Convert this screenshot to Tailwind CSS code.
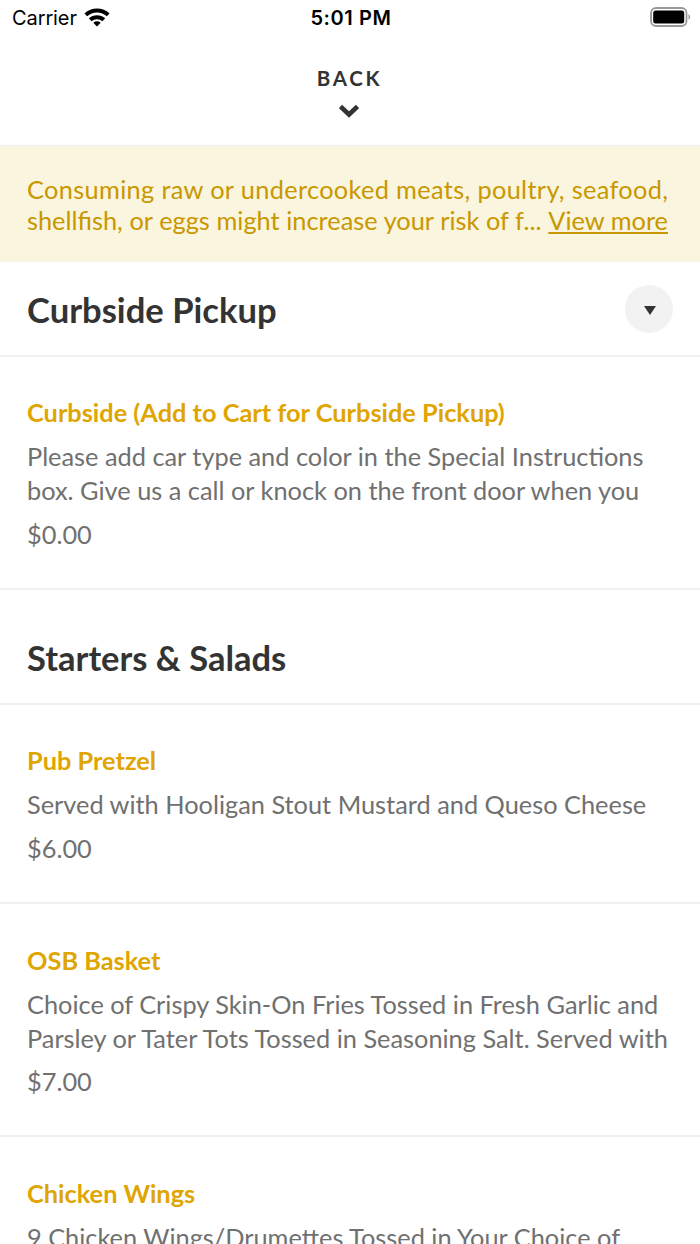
<!DOCTYPE html>
<html lang="en">
<head>
  <meta charset="UTF-8">
  <meta name="viewport" content="width=device-width, initial-scale=1.0">
  <title>Menu</title>
  <script src="https://cdn.jsdelivr.net/npm/@tailwindcss/browser@4"></script>
</head>
<body class="bg-white font-['Lato',sans-serif] text-[#707070] h-[1244px] overflow-hidden">
  <!-- Status bar -->
  <div class="grid grid-cols-3 items-center h-9 pl-3 pr-2 font-['Inter',sans-serif] text-black text-[20px]">
    <div class="flex items-center gap-[7px]">
      <span class="tracking-[-0.1px]">Carrier</span>
      <svg class="w-[26px] h-[19px] -mt-0.5" viewBox="0 0 26 19" fill="none" stroke="#000" stroke-width="4">
        <path d="M1.800 6.900a16.200 16.200 0 0 1 22.400 0"/>
        <path d="M6.200 11.800a10 10 0 0 1 13.600 0"/>
        <path d="M13 18.500l-3.700-3.700a5.500 5.500 0 0 1 7.400 0z" fill="#000" stroke="none"/>
      </svg>
    </div>
    <span class="text-center font-semibold tracking-[0.6px] -ml-0.5">5:01 PM</span>
    <svg class="justify-self-end w-[42px] h-5 -mt-0.5" viewBox="0 0 42 20">
      <rect x="1" y="1" width="35.500" height="18" rx="5" fill="none" stroke="#999" stroke-width="1.800"/>
      <rect x="3.200" y="3.500" width="31" height="13" rx="2.500" fill="#000"/>
      <path d="M38.500 7q3.500 3 0 6z" fill="#999"/>
    </svg>
  </div>

  <!-- Header -->
  <header class="flex flex-col items-center h-[110px] pt-[30px] pr-0.5 border-b border-[#efeff2] text-[#333]">
    <span class="pl-px text-[20.5px] leading-6 font-bold tracking-[2.7px]">BACK</span>
    <svg class="w-5 h-4 mt-[13px]" viewBox="0 0 20 16" fill="none" stroke="#333" stroke-width="4.600">
      <path d="M1.500 3.500l8.500 8 8.500-8"/>
    </svg>
  </header>

  <!-- Notice -->
  <div class="h-[116px] px-[27px] pt-[28px] bg-[#faf5de] text-[#c99700] text-[25.35px] leading-[31px] whitespace-nowrap">
    <p class="tracking-[0.335px]">Consuming raw or undercooked meats, poultry, seafood,</p>
    <p class="flex justify-between w-[641px]"><span class="[word-spacing:0.15px]">shellfish, or eggs might increase your risk of f...</span><a class="underline">View more</a></p>
  </div>

  <!-- Menu -->
  <section>
    <div class="flex justify-between items-center h-[95px] px-[27px] pt-0.5 border-b-2 border-[#f0f0f0]">
      <h2 class="text-[34.6px] font-bold text-[#333]">Curbside Pickup</h2>
      <button class="flex items-center justify-center size-12 -mt-px rounded-full bg-[#f2f2f2]">
        <svg class="w-3 h-[9px] ml-0.5 mt-0.5" viewBox="0 0 12 9" fill="#333"><path d="M0 0h12L6 9z"/></svg>
      </button>
    </div>
    <article class="h-[233px] px-[27px] pt-[38px] border-b-2 border-[#f0f0f0] text-[25.35px] leading-[34px] whitespace-nowrap">
      <h3 class="font-bold text-[#dfa500]">Curbside (Add to Cart for Curbside Pickup)</h3>
      <p class="mt-2.5">Please add car type and color in the Special Instructions<br>box. Give us a call or knock on the front door when you</p>
      <p class="mt-2.5">$0.00</p>
    </article>
  </section>

  <section>
    <div class="flex items-center h-[115px] pt-[22px] px-[27px] border-b-2 border-[#f0f0f0]">
      <h2 class="text-[34.5px] font-bold text-[#333]">Starters &amp; Salads</h2>
    </div>
    <article class="h-[199px] px-[27px] pt-[38px] border-b-2 border-[#f0f0f0] text-[25.35px] leading-[34px] whitespace-nowrap">
      <h3 class="font-bold text-[#dfa500]">Pub Pretzel</h3>
      <p class="mt-2.5">Served with Hooligan Stout Mustard and Queso Cheese</p>
      <p class="mt-2.5">$6.00</p>
    </article>
    <article class="h-[233px] px-[27px] pt-[39px] border-b-2 border-[#f0f0f0] text-[25.35px] leading-[34px] whitespace-nowrap">
      <h3 class="font-bold text-[#dfa500]">OSB Basket</h3>
      <p class="mt-2.5">Choice of Crispy Skin-On Fries Tossed in Fresh Garlic and<br>Parsley or Tater Tots Tossed in Seasoning Salt. Served with</p>
      <p class="mt-[9px]">$7.00</p>
    </article>
    <article class="px-[27px] pt-[39px] text-[25.35px] leading-[34px] whitespace-nowrap">
      <h3 class="font-bold text-[#dfa500]">Chicken Wings</h3>
      <p class="mt-2.5">9 Chicken Wings/Drumettes Tossed in Your Choice of</p>
    </article>
  </section>
</body>
</html>
